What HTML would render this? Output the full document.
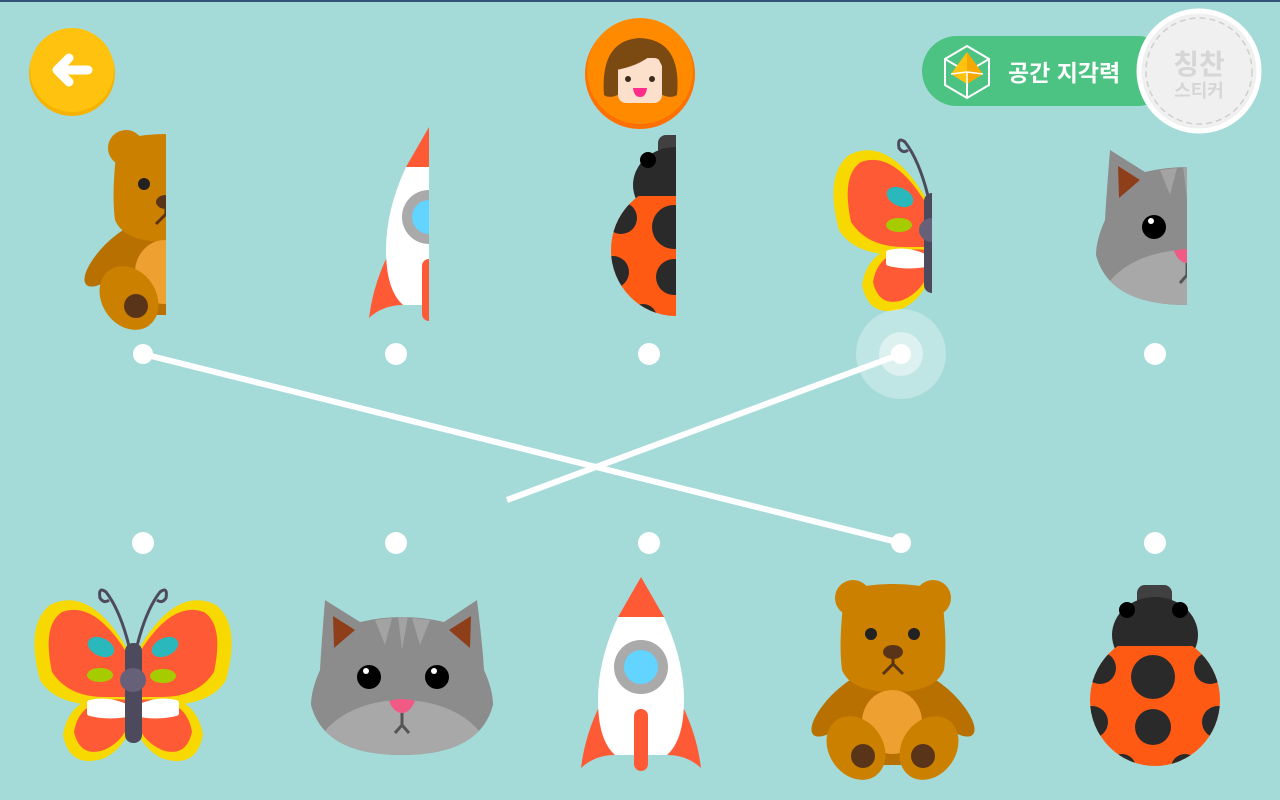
<!DOCTYPE html>
<html><head><meta charset="utf-8"><style>
html,body{margin:0;padding:0;width:1280px;height:800px;overflow:hidden;background:#a4dbd8;font-family:"Liberation Sans","Noto Sans CJK KR",sans-serif}
svg{position:absolute;left:0;top:0}
</style></head><body>
<svg width="1280" height="800" viewBox="0 0 1280 800">
<defs>
<g id="bear">
 <circle cx="853" cy="598" r="18" fill="#cc8000"/><circle cx="853" cy="600" r="8" fill="#9a5e0a"/>
 <circle cx="933" cy="598" r="18" fill="#cc8000"/><circle cx="933" cy="600" r="8" fill="#9a5e0a"/>
 <ellipse cx="843" cy="705" rx="15" ry="42" transform="rotate(45 843 705)" fill="#b87000"/>
 <ellipse cx="943" cy="705" rx="15" ry="42" transform="rotate(-45 943 705)" fill="#b87000"/>
 <rect x="852" y="670" width="82" height="95" rx="20" fill="#b87000"/>
 <path d="M845 590 Q893 578 941 590 Q948 640 944 670 Q935 692 893 692 Q851 692 842 670 Q838 640 845 590Z" fill="#cc8000"/>
 <ellipse cx="892" cy="722" rx="30" ry="32" fill="#eea030"/>
 <ellipse cx="856" cy="748" rx="27" ry="34" transform="rotate(-35 856 748)" fill="#cc8000"/>
 <ellipse cx="929" cy="748" rx="27" ry="34" transform="rotate(35 929 748)" fill="#cc8000"/>
 <circle cx="863" cy="756" r="12" fill="#5a3418"/><circle cx="923" cy="756" r="12" fill="#5a3418"/>
 <circle cx="871" cy="634" r="6" fill="#222"/><circle cx="914" cy="634" r="6" fill="#222"/>
 <ellipse cx="893" cy="652" rx="10" ry="7" fill="#5a3418"/>
 <path d="M893 655 V664 M883 674 L893 664 L903 674" stroke="#5a3418" stroke-width="3" fill="none"/>
</g>
<g id="rocket">
 <path d="M641 577 L664 617 L618 617Z" fill="#ff5a36"/>
 <path d="M600 705 Q585 735 581 768 Q595 755 615 755Z" fill="#ff5a36"/>
 <path d="M682 705 Q697 735 701 768 Q687 755 667 755Z" fill="#ff5a36"/>
 <path d="M618 617 L664 617 Q684 660 684 700 Q684 740 667 755 L615 755 Q598 740 598 700 Q598 660 618 617Z" fill="#fff"/>
 <circle cx="641" cy="667" r="27" fill="#aaa"/><circle cx="641" cy="667" r="17" fill="#62d4ff"/>
 <rect x="634" y="709" width="14" height="62" rx="7" fill="#ff5a36"/>
</g>
<clipPath id="lbc"><ellipse cx="1155" cy="700" rx="65" ry="66"/></clipPath>
<g id="ladybug">
 <rect x="1137" y="585" width="35" height="22" rx="8" fill="#404040"/>
 <ellipse cx="1155" cy="635" rx="43" ry="38" fill="#2a2a2a"/>
 <circle cx="1127" cy="610" r="8" fill="#000"/><circle cx="1180" cy="610" r="8" fill="#000"/>
 <g clip-path="url(#lbc)">
  <rect x="1085" y="646" width="140" height="130" fill="#ff5a14"/>
  <circle cx="1153" cy="677" r="22" fill="#2a2a2a"/>
  <circle cx="1100" cy="668" r="16" fill="#2a2a2a"/><circle cx="1210" cy="668" r="16" fill="#2a2a2a"/>
  <circle cx="1092" cy="722" r="16" fill="#2a2a2a"/><circle cx="1218" cy="722" r="16" fill="#2a2a2a"/>
  <circle cx="1153" cy="727" r="18" fill="#2a2a2a"/>
  <circle cx="1122" cy="768" r="14" fill="#2a2a2a"/><circle cx="1185" cy="768" r="14" fill="#2a2a2a"/>
 </g>
</g>
<g id="butterfly">
 <path d="M128 650 Q90 585 50 605 Q25 625 40 680 Q55 705 100 705 L128 705Z" fill="#f7d800"/>
 <path d="M138 650 Q176 585 216 605 Q241 625 226 680 Q211 705 166 705 L138 705Z" fill="#f7d800"/>
 <path d="M128 695 Q70 690 63 735 Q70 770 105 758 Q128 745 132 720Z" fill="#f7d800"/>
 <path d="M138 695 Q196 690 203 735 Q196 770 161 758 Q138 745 134 720Z" fill="#f7d800"/>
 <path d="M128 655 Q95 600 62 612 Q42 625 52 672 Q68 697 105 697 L128 697Z" fill="#ff5a36"/>
 <path d="M138 655 Q171 600 204 612 Q224 625 214 672 Q198 697 161 697 L138 697Z" fill="#ff5a36"/>
 <path d="M128 700 Q80 695 74 732 Q80 758 104 750 Q126 740 130 718Z" fill="#ff5a36"/>
 <path d="M138 700 Q186 695 192 732 Q186 758 162 750 Q140 740 136 718Z" fill="#ff5a36"/>
 <ellipse cx="101" cy="647" rx="14" ry="9" transform="rotate(25 101 647)" fill="#2bb8bd"/>
 <ellipse cx="165" cy="647" rx="14" ry="9" transform="rotate(-25 165 647)" fill="#2bb8bd"/>
 <ellipse cx="100" cy="675" rx="13" ry="7" fill="#a6cc00"/><ellipse cx="163" cy="676" rx="13" ry="7" fill="#a6cc00"/>
 <path d="M90 703 Q110 698 132 710 L132 713 Q110 718 90 713Z" fill="#fff" stroke="#fff" stroke-width="6" stroke-linejoin="round"/>
 <path d="M176 703 Q156 698 134 710 L134 713 Q156 718 176 713Z" fill="#fff" stroke="#fff" stroke-width="6" stroke-linejoin="round"/>
 <path d="M129 646 Q120 610 106 592 Q98 586 100 598 Q104 604 109 600" stroke="#4e4a5e" stroke-width="3" fill="none"/>
 <path d="M137 646 Q146 610 160 592 Q168 586 166 598 Q162 604 157 600" stroke="#4e4a5e" stroke-width="3" fill="none"/>
 <rect x="125" y="643" width="17" height="100" rx="8" fill="#4e4a5e"/>
 <ellipse cx="133" cy="680" rx="13" ry="12" fill="#666078"/>
</g>
<clipPath id="cath"><path d="M325 600 L360 622 Q402 612 444 622 L477 600 Q483 650 484 670 Q493 690 493 705 Q480 755 402 755 Q324 755 311 705 Q311 690 320 670 Q321 650 325 600Z"/></clipPath>
<g id="cat">
 <g clip-path="url(#cath)">
  <rect x="300" y="590" width="200" height="170" fill="#8c8c8c"/>
  <ellipse cx="402" cy="760" rx="88" ry="60" fill="#a8a8a8"/>
  <path d="M375 620 L385 645 L392 618Z M398 616 L402 650 L408 616Z M412 618 L420 645 L430 620Z" fill="#a3a3a3"/>
 </g>
 <path d="M333 616 L355 630 L334 648Z" fill="#8f3e1a"/><path d="M471 616 L449 630 L470 648Z" fill="#8f3e1a"/>
 <circle cx="369" cy="677" r="12" fill="#000"/><circle cx="366" cy="671" r="3" fill="#fff"/>
 <circle cx="437" cy="677" r="12" fill="#000"/><circle cx="434" cy="671" r="3" fill="#fff"/>
 <path d="M389 701 Q402 697 415 701 Q410 713 402 713 Q394 713 389 701Z" fill="#f05a84"/>
 <path d="M402 713 V725 M395 733 L402 725 L409 733" stroke="#555" stroke-width="3" fill="none"/>
</g>
<clipPath id="cBear"><rect x="700" y="560" width="193" height="240"/></clipPath>
<clipPath id="cRocket"><rect x="560" y="560" width="81" height="240"/></clipPath>
<clipPath id="cLady"><rect x="1050" y="560" width="105" height="240"/></clipPath>
<clipPath id="cBut"><rect x="0" y="560" width="133" height="240"/></clipPath>
<clipPath id="cCat"><rect x="280" y="560" width="122" height="240"/></clipPath>
</defs>

<rect x="0" y="0" width="1280" height="2" fill="#34527a"/>

<g transform="translate(-727,-450)"><g clip-path="url(#cBear)"><use href="#bear"/></g></g>
<g transform="translate(-212,-450)"><g clip-path="url(#cRocket)"><use href="#rocket"/></g></g>
<g transform="translate(-479,-450)"><g clip-path="url(#cLady)"><use href="#ladybug"/></g></g>
<g transform="translate(799,-450)"><g clip-path="url(#cBut)"><use href="#butterfly"/></g></g>
<g transform="translate(785,-450)"><g clip-path="url(#cCat)"><use href="#cat"/></g></g>

<use href="#butterfly"/><use href="#cat"/><use href="#rocket"/><use href="#bear"/><use href="#ladybug"/>

<circle cx="901" cy="354" r="45" fill="#fff" fill-opacity="0.3"/>
<circle cx="901" cy="354" r="22" fill="#fff" fill-opacity="0.45"/>
<line x1="143" y1="354" x2="901" y2="543" stroke="#fff" stroke-width="6"/>
<line x1="901" y1="354" x2="507" y2="500" stroke="#fff" stroke-width="6"/>
<g fill="#fff">
<circle cx="143" cy="354" r="10"/><circle cx="396" cy="354" r="11"/><circle cx="649" cy="354" r="11"/><circle cx="901" cy="354" r="10"/><circle cx="1155" cy="354" r="11"/>
<circle cx="143" cy="543" r="11"/><circle cx="396" cy="543" r="11"/><circle cx="649" cy="543" r="11"/><circle cx="901" cy="543" r="10"/><circle cx="1155" cy="543" r="11"/>
</g>

<circle cx="72" cy="73" r="43" fill="#f5b300"/>
<circle cx="72" cy="70" r="42" fill="#ffc20e"/>
<path d="M88 70 H58 M69 58 L57 70 L69 82" stroke="#fff" stroke-width="9" stroke-linecap="round" stroke-linejoin="round" fill="none"/>

<circle cx="640" cy="74" r="55" fill="#ff7000"/>
<circle cx="640" cy="71" r="53" fill="#ff8a00"/>
<path d="M604 95 Q600 40 640 38 Q682 40 677 95 Q668 100 658 92 L622 92 Q612 100 604 95Z" fill="#7a4a12"/>
<rect x="618" y="58" width="44" height="45" rx="8" fill="#fde0cc"/>
<path d="M616 70 Q640 66 655 52 Q660 62 664 70 L666 52 Q640 40 616 55Z" fill="#7a4a12"/>
<circle cx="628" cy="79" r="3" fill="#3a2a20"/><circle cx="652" cy="79" r="3" fill="#3a2a20"/>
<path d="M633 88 H647 Q646 97 640 97 Q634 97 633 88Z" fill="#ff2d8a"/>

<rect x="922" y="36" width="250" height="70" rx="35" fill="#4dc383"/>
<g stroke="#fff" stroke-width="2" fill="none">
<path d="M967 46 L989 59 L989 85 L967 98 L945 85 L945 59Z"/>
<path d="M945 59 L967 72 L989 59 M967 72 V98"/>
</g>
<path d="M967 52 L951 74 L967 84 L983 74Z" fill="#ffc20e"/>
<path d="M967 52 L967 84 L983 74Z" fill="#f5a800"/>
<path d="M967 72 L951 74 M967 72 L983 74 M967 72 V84" stroke="#fff" stroke-width="1.5"/>
<text x="1008" y="81" font-size="23" font-weight="bold" fill="#fff">공간 지각력</text>

<circle cx="1199" cy="71" r="60" fill="#f0f0f0" stroke="#fff" stroke-width="5"/>
<circle cx="1199" cy="71" r="53" fill="none" stroke="#cfcfcf" stroke-width="1.5" stroke-dasharray="6 4"/>
<text x="1199" y="74" font-size="28" font-weight="bold" fill="#d6d6d6" text-anchor="middle">칭찬</text>
<text x="1199" y="97" font-size="18" font-weight="bold" fill="#d6d6d6" text-anchor="middle">스티커</text>
</svg>
</body></html>
